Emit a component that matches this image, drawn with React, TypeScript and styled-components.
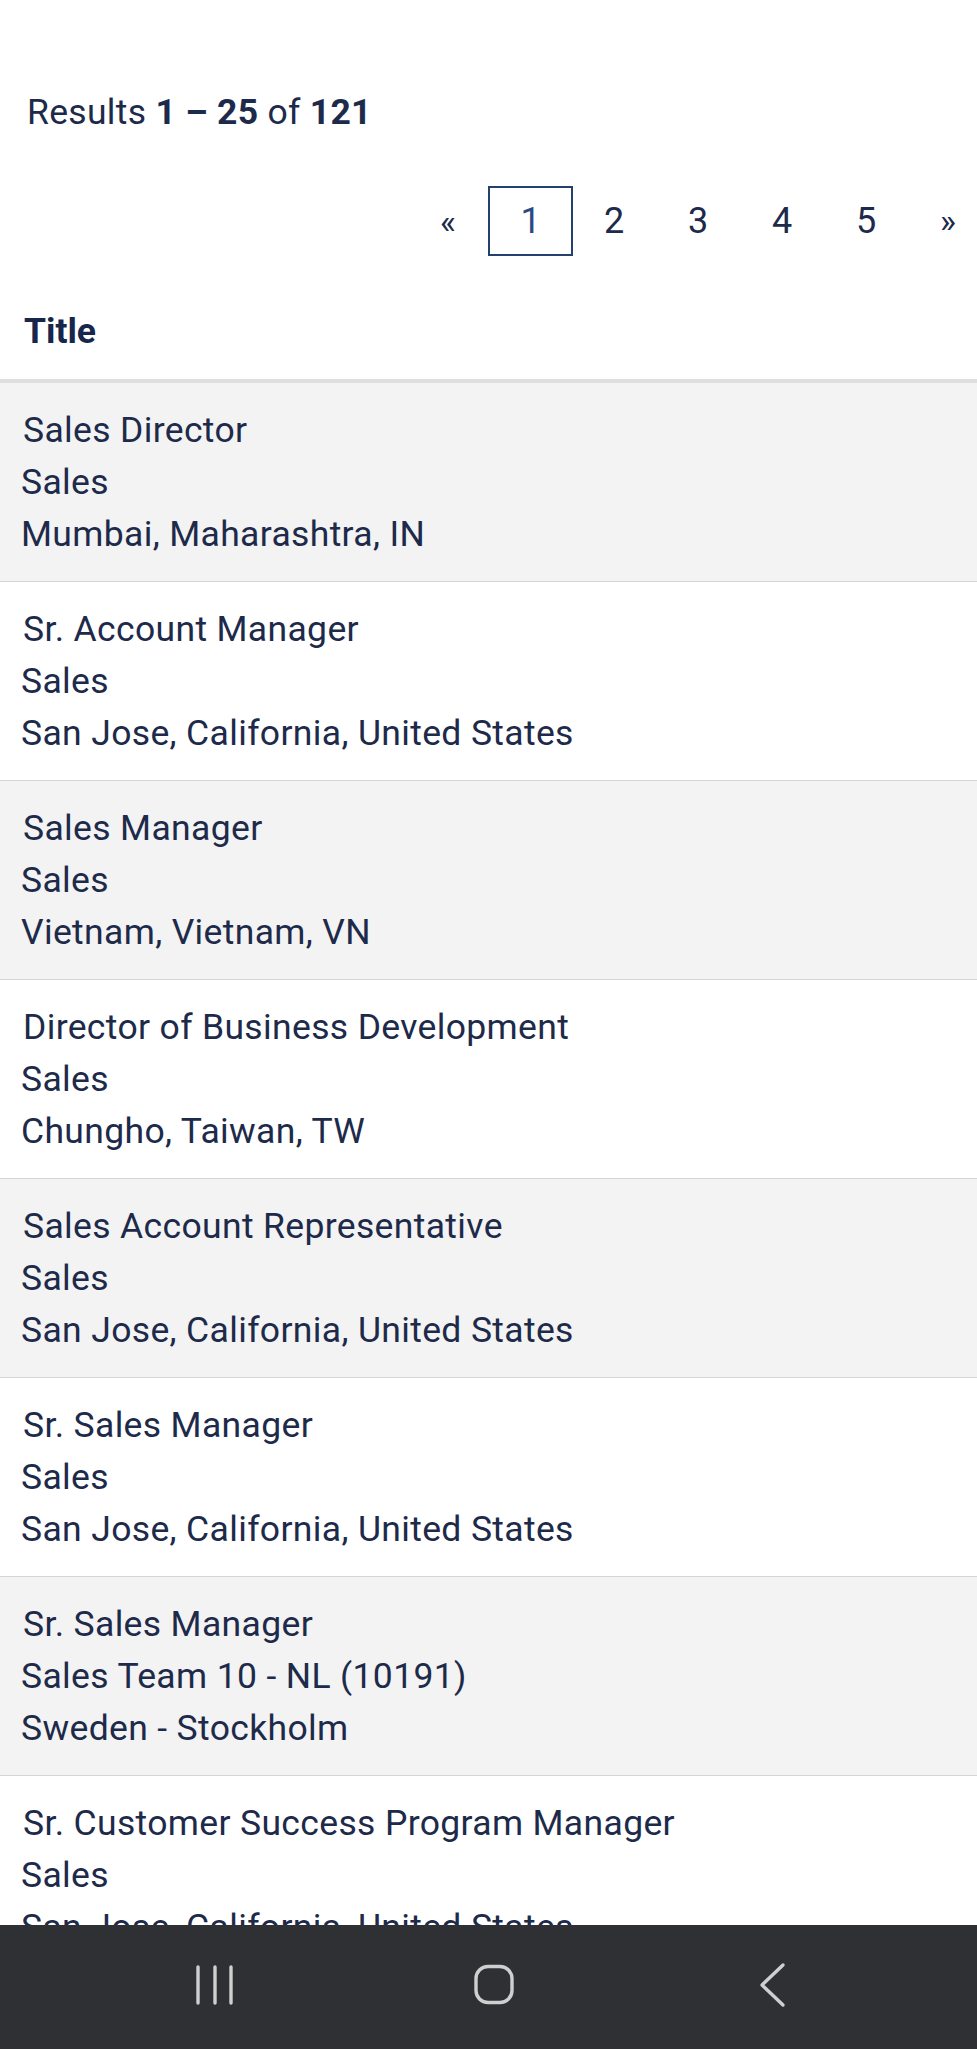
import React from "react";
import styled, { createGlobalStyle } from "styled-components";

const GlobalStyle = createGlobalStyle`
  html, body {
    margin: 0;
    padding: 0;
    background: #ffffff;
  }
  body {
    font-family: Roboto, "Liberation Sans", sans-serif;
    color: #1d2a4a;
  }
`;

interface Job {
  title: string;
  department: string;
  location: string;
}

const jobs: Job[] = [
  { title: "Sales Director", department: "Sales", location: "Mumbai, Maharashtra, IN" },
  { title: "Sr. Account Manager", department: "Sales", location: "San Jose, California, United States" },
  { title: "Sales Manager", department: "Sales", location: "Vietnam, Vietnam, VN" },
  { title: "Director of Business Development", department: "Sales", location: "Chungho, Taiwan, TW" },
  { title: "Sales Account Representative", department: "Sales", location: "San Jose, California, United States" },
  { title: "Sr. Sales Manager", department: "Sales", location: "San Jose, California, United States" },
  { title: "Sr. Sales Manager", department: "Sales Team 10 - NL (10191)", location: "Sweden - Stockholm" },
  { title: "Sr. Customer Success Program Manager", department: "Sales", location: "San Jose, California, United States" },
];

const pages = ["«", "1", "2", "3", "4", "5", "»"];

const App: React.FC = () => {
  return (
    <>
      <GlobalStyle />
      <Page>
        <ResultsText>
          Results <strong>1 – 25</strong> of <strong>121</strong>
        </ResultsText>
        <Pagination>
          {pages.map((p) => (
            <PageItem key={p} $active={p === "1"} $arrow={p === "«" || p === "»"}>
              {p}
            </PageItem>
          ))}
        </Pagination>
        <TableHeader>Title</TableHeader>
        <JobList>
          {jobs.map((job, index) => (
            <JobRow key={index} $striped={index % 2 === 0}>
              <JobTitle>{job.title}</JobTitle>
              <JobLine>{job.department}</JobLine>
              <JobLine>{job.location}</JobLine>
            </JobRow>
          ))}
        </JobList>
      </Page>
      <NavBar>
        <NavButton>
          <svg width="40" height="44" viewBox="0 0 40 44" fill="none" stroke="#cfcfd0" strokeWidth="3.4" strokeLinecap="round">
            <line x1="3" y1="4" x2="3" y2="40" />
            <line x1="20" y1="4" x2="20" y2="40" />
            <line x1="36" y1="4" x2="36" y2="40" />
          </svg>
        </NavButton>
        <NavButton>
          <svg width="44" height="44" viewBox="0 0 44 44" fill="none" stroke="#cfcfd0" strokeWidth="3.4">
            <rect x="4" y="3.5" width="36" height="36" rx="12" />
          </svg>
        </NavButton>
        <NavButton>
          <svg width="30" height="46" viewBox="0 0 30 46" fill="none" stroke="#cfcfd0" strokeWidth="3.4" strokeLinecap="round" strokeLinejoin="round">
            <polyline points="25,3 4,23 25,43" />
          </svg>
        </NavButton>
      </NavBar>
    </>
  );
};

export default App;

const Page = styled.div`
  padding-top: 92px;
  padding-bottom: 140px;
`;

const ResultsText = styled.div`
  font-size: 35.5px;
  line-height: 41px;
  letter-spacing: 0.3px;
  padding-left: 27px;
  color: #1d2a4a;

  strong {
    font-weight: 700;
  }
`;

const Pagination = styled.div`
  display: flex;
  justify-content: flex-end;
  align-items: center;
  margin-top: 53px;
  padding-right: 7px;
`;

const PageItem = styled.div<{ $active?: boolean; $arrow?: boolean }>`
  width: ${(p) => (p.$arrow ? "44px" : p.$active ? "85px" : "84px")};
  margin: ${(p) => (p.$arrow ? "0 18px" : p.$active ? "0 -1px 0 0" : "0")};
  height: 70px;
  box-sizing: border-box;
  display: flex;
  align-items: center;
  justify-content: center;
  font-size: ${(p) => (p.$arrow ? "34px" : "36px")};
  color: ${(p) => (p.$active ? "#2b4a85" : "#1d2a4a")};
  border: ${(p) => (p.$active ? "2px solid #23406e" : "none")};

  &:first-child {
    margin-right: 18px;
  }

  &:last-child {
    margin-right: 0;
  }
`;

const TableHeader = styled.div`
  margin-top: 55px;
  padding: 0 0 28px 24px;
  font-size: 35.5px;
  line-height: 40px;
  font-weight: 700;
  color: #17264a;
  border-bottom: 4px solid #dedede;
`;

const JobList = styled.div`
  display: flex;
  flex-direction: column;
`;

const JobRow = styled.div<{ $striped: boolean }>`
  background: ${(p) => (p.$striped ? "#f3f3f3" : "#ffffff")};
  border-bottom: 1px solid #d6d6d6;
  padding: 21px 22px 21px 21px;
  font-size: 35.5px;
  line-height: 52px;
  letter-spacing: 0.35px;
`;

const JobTitle = styled.div`
  padding-left: 2px;
  color: #1d2a4a;
`;

const JobLine = styled.div`
  color: #1d2a4a;
`;

const NavBar = styled.div`
  position: fixed;
  left: 0;
  right: 0;
  bottom: 0;
  height: 124px;
  background: #2f3034;
  display: flex;
  justify-content: center;
  align-items: center;
  padding-left: 11px;
  padding-bottom: 4px;
  box-sizing: border-box;
`;

const NavButton = styled.div`
  width: 279px;
  display: flex;
  justify-content: center;
  align-items: center;
`;
